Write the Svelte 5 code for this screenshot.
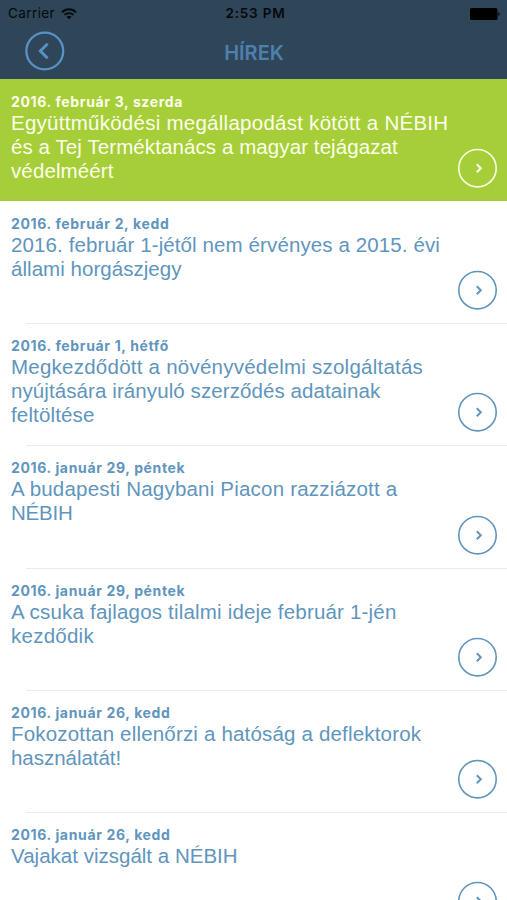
<script lang="ts">
  type Line = { text: string; tracking: number };
  type NewsItem = { date: string; lines: Line[] };

  const news: NewsItem[] = [
    {
      date: '2016. február 3, szerda',
      lines: [
        { text: 'Együttműködési megállapodást kötött a NÉBIH', tracking: 0.26 },
        { text: 'és a Tej Terméktanács a magyar tejágazat', tracking: 0.09 },
        { text: 'védelméért', tracking: 0.12 },
      ],
    },
    {
      date: '2016. február 2, kedd',
      lines: [
        { text: '2016. február 1-jétől nem érvényes a 2015. évi', tracking: 0.11 },
        { text: 'állami horgászjegy', tracking: 0.04 },
      ],
    },
    {
      date: '2016. február 1, hétfő',
      lines: [
        { text: 'Megkezdődött a növényvédelmi szolgáltatás', tracking: 0.24 },
        { text: 'nyújtására irányuló szerződés adatainak', tracking: 0.09 },
        { text: 'feltöltése', tracking: 0.15 },
      ],
    },
    {
      date: '2016. január 29, péntek',
      lines: [
        { text: 'A budapesti Nagybani Piacon razziázott a', tracking: 0.2 },
        { text: 'NÉBIH', tracking: -0.2 },
      ],
    },
    {
      date: '2016. január 29, péntek',
      lines: [
        { text: 'A csuka fajlagos tilalmi ideje február 1-jén', tracking: 0.19 },
        { text: 'kezdődik', tracking: 0.25 },
      ],
    },
    {
      date: '2016. január 26, kedd',
      lines: [
        { text: 'Fokozottan ellenőrzi a hatóság a deflektorok', tracking: 0.18 },
        { text: 'használatát!', tracking: -0.03 },
      ],
    },
    {
      date: '2016. január 26, kedd',
      lines: [{ text: 'Vajakat vizsgált a NÉBIH', tracking: 0.01 }],
    },
  ];

  let selected = $state(0);
</script>

<div class="screen">
  <header>
    <div class="status">
      <div class="carrier">
        <span>Carrier</span>
        <svg width="16" height="12" viewBox="0 0 16 12" fill="none" stroke="#05090d" stroke-width="1.9">
          <path d="M1 4.3C5 .3 11 .3 15 4.3" />
          <path d="M3.5 6.9C6 4.5 10 4.5 12.5 6.9" />
          <path d="M8 11.3L5.5 8.7C7 7.4 9 7.4 10.5 8.7Z" fill="#05090d" stroke="none" />
        </svg>
      </div>
      <span class="time">2:53 PM</span>
      <svg class="battery" width="30" height="12" viewBox="0 0 30 12" fill="#000">
        <rect x="0" y="0" width="27.5" height="12" rx="1.5" />
        <path d="M28.3 4.2C30.2 4.6 30.2 7.4 28.3 7.8Z" />
      </svg>
    </div>
    <nav>
      <button class="back" type="button" aria-label="Vissza">
        <svg width="40" height="40" viewBox="0 0 40 40" fill="none" stroke="currentColor">
          <circle cx="19.8" cy="20" r="18.4" stroke-width="2.3" />
          <path d="M22.6 12.8L15.4 20L22.6 27.2" stroke-width="3" />
        </svg>
      </button>
      <h1>HÍREK</h1>
    </nav>
  </header>

  <ul>
    {#each news as item, i}
      <li class:selected={i === selected} class:divided={i > 0 && i - 1 !== selected}>
        <button class="row" type="button" onclick={() => (selected = i)}>
          <span class="date">{item.date}</span>
          <span class="title">
            {#each item.lines as line}
              <span class="line" style:letter-spacing="{line.tracking}px">{line.text}</span>
            {/each}
          </span>
          <svg class="more" width="40" height="40" viewBox="0 0 40 40" fill="none" stroke="currentColor">
            <circle cx="19.5" cy="20.2" r="18.7" stroke-width="1.6" />
            <path d="M18.8 16.2L22.8 20.2L18.8 24.2" stroke-width="2" />
          </svg>
        </button>
      </li>
    {/each}
  </ul>
</div>

<style>
  :global(body) {
    background: #fff;
    overflow: hidden;
  }

  .screen {
    height: 900px;
    overflow: hidden;
    color: #6095bd;
    font-family: "Liberation Sans", Arial, sans-serif;
  }

  header {
    box-sizing: border-box;
    height: 79px;
    background: #2f4558;
  }

  .status {
    display: grid;
    grid-template-columns: 1fr auto 1fr;
    align-items: center;
    height: 27px;
    padding: 0 7px 0 8px;
    color: #05090d;
    font: 13.5px/27px Inter, sans-serif;
  }

  .carrier {
    display: flex;
    align-items: center;
    gap: 6px;
    letter-spacing: 0.4px;
  }

  .time {
    margin-left: 3px;
    font-weight: 600;
    letter-spacing: 0.8px;
  }

  .battery {
    justify-self: end;
  }

  nav {
    display: grid;
    grid-template-columns: 1fr auto 1fr;
    align-items: center;
    height: 48px;
    padding: 0 25px;
  }

  button {
    padding: 0;
    border: none;
    background: none;
    color: inherit;
    font: inherit;
    text-align: left;
    cursor: pointer;
  }

  .back {
    width: 40px;
    height: 40px;
    color: #5792c6;
  }

  svg {
    display: block;
  }

  h1 {
    margin: 3px 0 0 1px;
    color: #4e80ae;
    font: 600 20px/24px Inter, sans-serif;
  }

  ul {
    margin: 0;
    padding: 0;
    list-style: none;
  }

  li {
    height: 122.15px;
  }

  .divided {
    background: linear-gradient(#e9ecee, #e9ecee) 26px 0 / 100% 1px no-repeat;
  }

  .selected {
    background: #a6ce39;
    color: #fbffea;
  }

  .row {
    position: relative;
    display: flex;
    flex-direction: column;
    box-sizing: border-box;
    width: 100%;
    height: 100%;
    padding: 14px 11px 0;
  }

  .date {
    font: 700 14px/18px Inter, sans-serif;
    letter-spacing: 0.65px;
  }

  .line {
    display: block;
    font-size: 20.5px;
    line-height: 24px;
    white-space: nowrap;
  }

  .more {
    position: absolute;
    right: 9px;
    bottom: 13px;
  }
</style>
